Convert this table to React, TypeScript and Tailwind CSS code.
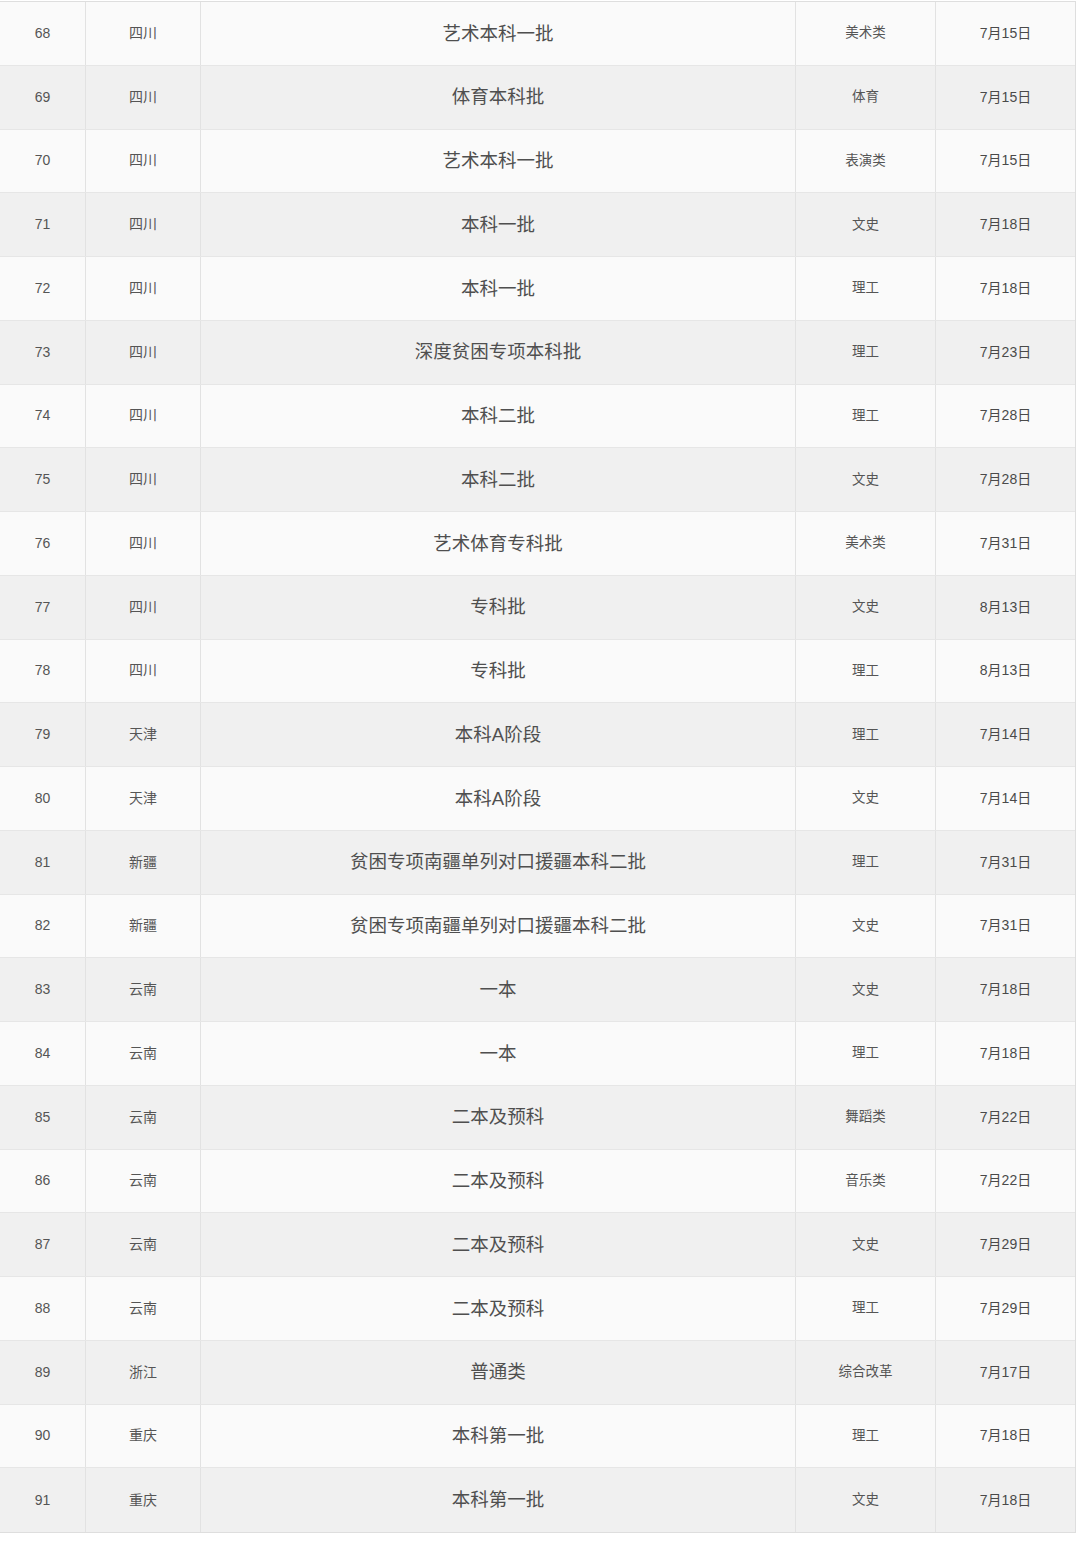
const rows: [number, string, string, string, string][] = [
  [68, '四川', '艺术本科一批', '美术类', '7月15日'],
  [69, '四川', '体育本科批', '体育', '7月15日'],
  [70, '四川', '艺术本科一批', '表演类', '7月15日'],
  [71, '四川', '本科一批', '文史', '7月18日'],
  [72, '四川', '本科一批', '理工', '7月18日'],
  [73, '四川', '深度贫困专项本科批', '理工', '7月23日'],
  [74, '四川', '本科二批', '理工', '7月28日'],
  [75, '四川', '本科二批', '文史', '7月28日'],
  [76, '四川', '艺术体育专科批', '美术类', '7月31日'],
  [77, '四川', '专科批', '文史', '8月13日'],
  [78, '四川', '专科批', '理工', '8月13日'],
  [79, '天津', '本科A阶段', '理工', '7月14日'],
  [80, '天津', '本科A阶段', '文史', '7月14日'],
  [81, '新疆', '贫困专项南疆单列对口援疆本科二批', '理工', '7月31日'],
  [82, '新疆', '贫困专项南疆单列对口援疆本科二批', '文史', '7月31日'],
  [83, '云南', '一本', '文史', '7月18日'],
  [84, '云南', '一本', '理工', '7月18日'],
  [85, '云南', '二本及预科', '舞蹈类', '7月22日'],
  [86, '云南', '二本及预科', '音乐类', '7月22日'],
  [87, '云南', '二本及预科', '文史', '7月29日'],
  [88, '云南', '二本及预科', '理工', '7月29日'],
  [89, '浙江', '普通类', '综合改革', '7月17日'],
  [90, '重庆', '本科第一批', '理工', '7月18日'],
  [91, '重庆', '本科第一批', '文史', '7月18日'],
];

const App = () => (
  <div className="w-[1080px] h-[1541px] bg-white pt-px font-['Liberation_Sans','Noto_Sans_CJK_SC',sans-serif] text-[#555]">
    <div className="w-[1076px] border-t border-b border-r border-[#dedede]">
      {rows.map(([no, prov, batch, cat, date], i) => (
        <div
          key={no}
          className={`grid grid-cols-[85px_115px_595px_140px_1fr] h-[63.75px] border-b border-[#e6e6e6] last:border-b-0 ${
            i % 2 === 0 ? 'bg-[#fafafa]' : 'bg-[#f0f0f0]'
          }`}
        >
          <div className="flex items-center justify-center text-[14px]">{no}</div>
          <div className="flex items-center justify-center border-l border-[#e2e2e2] text-[14px]">{prov}</div>
          <div className="flex items-center justify-center border-l border-[#e2e2e2] text-[18.5px] text-[#4f4f4f]">{batch}</div>
          <div className="flex items-center justify-center border-l border-[#e2e2e2] text-[13.5px]">{cat}</div>
          <div className="flex items-center justify-center border-l border-[#e2e2e2] text-[14px] text-[#4a4a4a]">{date}</div>
        </div>
      ))}
    </div>
  </div>
);

export default App;
